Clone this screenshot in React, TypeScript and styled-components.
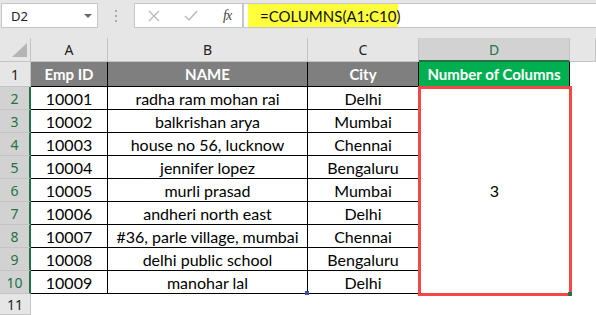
import React from 'react'
import styled, { createGlobalStyle, css } from 'styled-components'

const GlobalStyle = createGlobalStyle`
  html, body {
    margin: 0;
    padding: 0;
    background: #ffffff;
    overflow: hidden;
  }
  body {
    font-family: Lato, "Noto Sans", sans-serif;
  }
`

const cellFont = `Lato, "Liberation Sans", sans-serif`
const uiFont = `"Noto Sans", "Open Sans", sans-serif`
const green = '#217346'

const Page = styled.div`
  width: 596px;
  height: 315px;
  display: flex;
  flex-direction: column;
  background: #ffffff;
`

const TopBar = styled.div`
  height: 38px;
  background: #e6e6e6;
  display: flex;
  align-items: flex-start;
  padding: 3px 0 0 1px;
  box-sizing: border-box;
`

const NameBox = styled.div`
  width: 97px;
  height: 25px;
  box-sizing: border-box;
  background: #ffffff;
  border: 1px solid #c6c6c6;
  display: flex;
  align-items: center;
  justify-content: space-between;
  padding: 0 5px 0 9px;
  font-family: ${uiFont};
  font-size: 13px;
  color: #222;
`

const Caret = styled.span`
  width: 0;
  height: 0;
  border-left: 4px solid transparent;
  border-right: 4px solid transparent;
  border-top: 4px solid #6a6a6a;
`

const Dots = styled.div`
  width: 36px;
  height: 25px;
  display: flex;
  flex-direction: column;
  align-items: center;
  justify-content: center;
  gap: 3px;
  & > span {
    width: 2px;
    height: 2px;
    background: #a8a8a8;
  }
`

const ButtonsBox = styled.div`
  width: 109px;
  height: 25px;
  box-sizing: border-box;
  background: #ffffff;
  border: 1px solid #c6c6c6;
  display: flex;
  align-items: center;
  padding: 0 0 0 13px;
  gap: 24px;
`

const Fx = styled.span`
  font-family: "Liberation Serif", serif;
  font-style: italic;
  font-size: 14px;
  color: #444;
  letter-spacing: -1px;
  margin-left: 1px;
`

const FormulaField = styled.div`
  flex: 1;
  height: 25px;
  box-sizing: border-box;
  background: #ffffff;
  border: 1px solid #c6c6c6;
  border-right: none;
  display: flex;
  align-items: stretch;
  padding: 0 0 0 4px;
`

const Highlight = styled.div`
  width: 150px;
  background: #ffff3b;
  display: flex;
  align-items: center;
  padding-left: 12px;
  box-sizing: border-box;
  font-family: ${cellFont};
  font-size: 15px;
  color: #111;
`

const Sheet = styled.div`
  flex: 1;
  display: grid;
  grid-template-columns: 31px 77px 200px 111px 151px 1fr;
  grid-template-rows: 24px 25px repeat(9, 23px) 1fr;
`

const Head = styled.div<{ $selected?: boolean }>`
  box-sizing: border-box;
  background: #e6e6e6;
  border-right: 1px solid #c4c4c4;
  border-bottom: 1px solid #c4c4c4;
  display: flex;
  align-items: center;
  justify-content: center;
  font-family: ${uiFont};
  font-size: 14px;
  color: #222;
  position: relative;
  ${p =>
    p.$selected &&
    css`
      background: #d2d2d2;
      color: ${green};
      border-bottom: 2px solid ${green};
    `}
`

const Corner = styled.span`
  position: absolute;
  right: 3px;
  bottom: 4px;
  width: 0;
  height: 0;
  border-left: 15px solid transparent;
  border-bottom: 14px solid #b5b5b5;
`

const RowNum = styled.div<{ $selected?: boolean }>`
  box-sizing: border-box;
  background: #e6e6e6;
  border-right: 1px solid #c4c4c4;
  border-bottom: 1px solid #c4c4c4;
  display: flex;
  align-items: center;
  justify-content: center;
  font-family: ${uiFont};
  font-size: 14px;
  color: #222;
  ${p =>
    p.$selected &&
    css`
      background: #d2d2d2;
      color: ${green};
      border-right: 2px solid ${green};
    `}
`

const Cell = styled.div<{ $head?: 'gray' | 'green' }>`
  box-sizing: border-box;
  border-right: 1px solid #000;
  border-bottom: 1px solid #000;
  display: flex;
  align-items: center;
  justify-content: center;
  font-family: ${cellFont};
  font-size: 16px;
  color: #000;
  white-space: nowrap;
  position: relative;
  ${p =>
    p.$head &&
    css`
      background: ${p.$head === 'green' ? '#00b050' : '#7f7f7f'};
      color: #ffffff;
      font-weight: 700;
      font-size: 15px;
    `}
`

const Blank = styled.div`
  background: #ffffff;
`

const Merged = styled.div`
  grid-column: 5;
  grid-row: 3 / span 9;
  position: relative;
  display: flex;
  align-items: center;
  justify-content: center;
  font-family: ${cellFont};
  font-size: 16px;
  color: #000;
  &::after {
    content: '';
    position: absolute;
    top: -1px;
    left: -1px;
    right: -2px;
    bottom: -2px;
    border: 3px solid #f24848;
  }
`

const Handle = styled.span<{ $color: string }>`
  position: absolute;
  right: -2px;
  bottom: -2px;
  width: 4px;
  height: 4px;
  background: ${p => p.$color};
  z-index: 2;
`

const rows = [
  ['10001', 'radha ram mohan rai', 'Delhi'],
  ['10002', 'balkrishan arya', 'Mumbai'],
  ['10003', 'house no 56, lucknow', 'Chennai'],
  ['10004', 'jennifer lopez', 'Bengaluru'],
  ['10005', 'murli prasad', 'Mumbai'],
  ['10006', 'andheri north east', 'Delhi'],
  ['10007', '#36, parle village, mumbai', 'Chennai'],
  ['10008', 'delhi public school', 'Bengaluru'],
  ['10009', 'manohar lal', 'Delhi'],
]

function CrossIcon() {
  return (
    <svg width='12' height='12' viewBox='0 0 12 12'>
      <path d='M1 1 L11 11 M11 1 L1 11' stroke='#b8b8b8' strokeWidth='1.3' fill='none' />
    </svg>
  )
}

function CheckIcon() {
  return (
    <svg width='14' height='12' viewBox='0 0 14 12'>
      <path d='M1 6 L5 10 L13 1' stroke='#b8b8b8' strokeWidth='1.4' fill='none' />
    </svg>
  )
}

export default function App() {
  return (
    <Page>
      <GlobalStyle />
      <TopBar>
        <NameBox>
          D2
          <Caret />
        </NameBox>
        <Dots>
          <span />
          <span />
          <span />
        </Dots>
        <ButtonsBox>
          <CrossIcon />
          <CheckIcon />
          <Fx>fx</Fx>
        </ButtonsBox>
        <FormulaField>
          <Highlight>=COLUMNS(A1:C10)</Highlight>
        </FormulaField>
      </TopBar>
      <Sheet>
        <Head>
          <Corner />
        </Head>
        <Head>A</Head>
        <Head>B</Head>
        <Head>C</Head>
        <Head $selected>D</Head>
        <Head />

        <RowNum>1</RowNum>
        <Cell $head='gray'>Emp ID</Cell>
        <Cell $head='gray'>NAME</Cell>
        <Cell $head='gray'>City</Cell>
        <Cell $head='green'>Number of Columns</Cell>
        <Blank />

        {rows.map((r, i) => (
          <React.Fragment key={r[0]}>
            <RowNum $selected style={{ gridRow: i + 3 }}>
              {i + 2}
            </RowNum>
            <Cell style={{ gridRow: i + 3, gridColumn: 2 }}>{r[0]}</Cell>
            <Cell style={{ gridRow: i + 3, gridColumn: 3 }}>
              {r[1]}
              {i === rows.length - 1 && <Handle $color='#3b4fa8' />}
            </Cell>
            <Cell style={{ gridRow: i + 3, gridColumn: 4 }}>{r[2]}</Cell>
            <Blank style={{ gridRow: i + 3, gridColumn: 6 }} />
          </React.Fragment>
        ))}
        <Merged>
          3
          <Handle $color='#217346' />
        </Merged>

        <RowNum style={{ gridRow: 12 }}>11</RowNum>
      </Sheet>
    </Page>
  )
}
